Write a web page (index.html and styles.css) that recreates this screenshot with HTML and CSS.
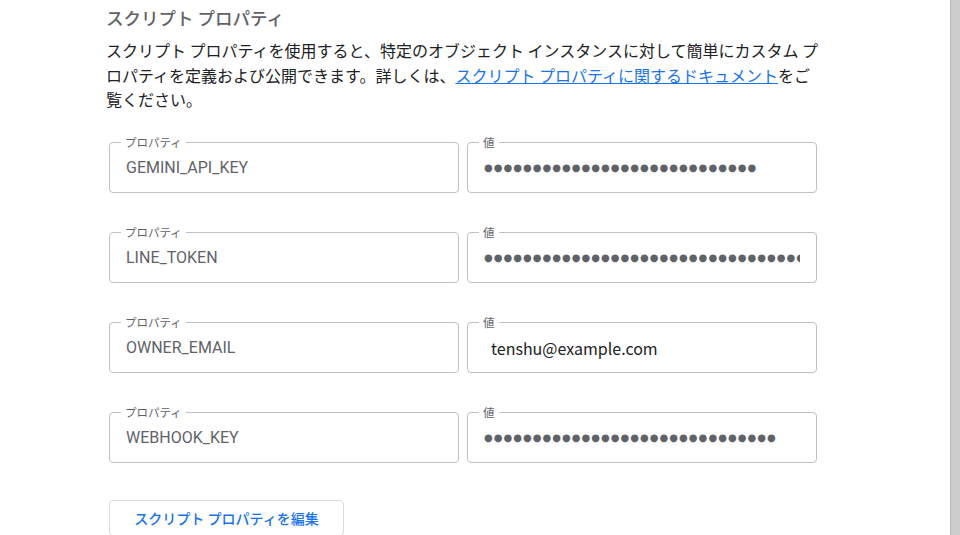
FILE: index.html
```html
<!DOCTYPE html>
<html lang="ja">
<head>
<meta charset="utf-8">
<link rel="stylesheet" href="styles.css">
</head>
<body>
<div class="page">
  <main class="section">
    <h2 class="title">スクリプト プロパティ</h2>
    <p class="desc">スクリプト プロパティを使用すると、特定のオブジェクト インスタンスに対して簡単にカスタム プロパティを定義および公開できます。詳しくは、<a class="link" href="#">スクリプト プロパティに関するドキュメント</a>をご覧ください。</p>
    <div class="props">
      <div class="row">
        <fieldset class="field"><legend class="label">プロパティ</legend><div class="value key">GEMINI_API_KEY</div></fieldset>
        <fieldset class="field"><legend class="label">値</legend><div class="value dots">●●●●●●●●●●●●●●●●●●●●●●●●●●●●</div></fieldset>
      </div>
      <div class="row">
        <fieldset class="field"><legend class="label">プロパティ</legend><div class="value key">LINE_TOKEN</div></fieldset>
        <fieldset class="field"><legend class="label">値</legend><div class="value dots">●●●●●●●●●●●●●●●●●●●●●●●●●●●●●●●●●●●●●●●●</div></fieldset>
      </div>
      <div class="row">
        <fieldset class="field"><legend class="label">プロパティ</legend><div class="value key">OWNER_EMAIL</div></fieldset>
        <fieldset class="field"><legend class="label">値</legend><div class="value plain">tenshu@example.com</div></fieldset>
      </div>
      <div class="row">
        <fieldset class="field"><legend class="label">プロパティ</legend><div class="value key">WEBHOOK_KEY</div></fieldset>
        <fieldset class="field"><legend class="label">値</legend><div class="value dots">●●●●●●●●●●●●●●●●●●●●●●●●●●●●●●</div></fieldset>
      </div>
    </div>
    <button class="edit-btn" type="button">スクリプト プロパティを編集</button>
  </main>
  <div class="scrollbar"></div>
</div>
</body>
</html>
```
FILE: styles.css
```css
html, body {
  margin: 0;
  padding: 0;
  background: #ffffff;
}
.page {
  display: flex;
  height: 535px;
  overflow: hidden;
}
.section {
  flex: 1;
  padding: 0 0 0 106px;
  font-family: "Noto Sans CJK JP", "Noto Sans", sans-serif;
  color: #202124;
}
.title {
  margin: 6px 0 0;
  font-size: 17.5px;
  font-weight: 500;
  line-height: 24px;
  color: #5f6368;
}
.desc {
  margin: 8px 0 0;
  width: 716px;
  font-size: 16px;
  line-height: 24.5px;
}
.link {
  color: #1a73e8;
  text-decoration: underline;
}
.props {
  margin: 25px 0 0 3px;
  display: flex;
  flex-direction: column;
  gap: 34px;
}
.row {
  display: flex;
  gap: 8px;
}
.field {
  box-sizing: border-box;
  width: 350px;
  margin: 0;
  padding: 0 16px 5px;
  border: 1px solid #bdc1c6;
  border-radius: 4px;
  min-width: 0;
}
.label {
  margin-left: -5px;
  padding: 0 4px;
  font-family: Roboto, "Noto Sans CJK JP", sans-serif;
  font-size: 11.5px;
  line-height: 12px;
  color: #5f6368;
}
.value {
  height: 38px;
  line-height: 38px;
  white-space: nowrap;
  overflow: hidden;
}
.key {
  font-family: Roboto, sans-serif;
  font-size: 16px;
  color: #5f6368;
}
.plain {
  padding-left: 7px;
  font-family: "Noto Sans CJK JP", sans-serif;
  font-size: 16px;
  color: #202124;
}
.dots {
  font-family: "DejaVu Sans", sans-serif;
  font-size: 10px;
  letter-spacing: 1.03px;
  color: #5f6368;
}
.edit-btn {
  margin: 37px 0 0 3px;
  width: 235px;
  height: 36px;
  background: #ffffff;
  border: 1px solid #dadce0;
  border-radius: 4px;
  font-family: "Noto Sans CJK JP", sans-serif;
  font-size: 14px;
  font-weight: 500;
  color: #1a73e8;
  padding: 0;
}
.scrollbar {
  width: 9px;
  flex: none;
  background: #cdcdcd;
  border-left: 1px solid #b8b8b8;
}
```
